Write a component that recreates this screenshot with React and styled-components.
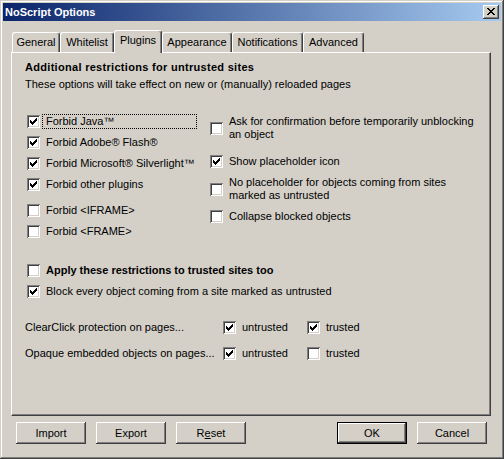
import React from "react";
import styled, { createGlobalStyle } from "styled-components";

const FACE = "#d4d0c8";

const GlobalStyle = createGlobalStyle`
  html, body {
    margin: 0;
    padding: 0;
    background: ${FACE};
  }
  body {
    font-family: "Liberation Sans", Arial, sans-serif;
    font-size: 11px;
    color: #000;
  }
`;

const Window = styled.div`
  width: 504px;
  height: 459px;
  box-sizing: border-box;
  padding: 3px;
  background: ${FACE};
  box-shadow: inset -1px -1px #404040, inset 1px 1px ${FACE},
    inset -2px -2px #808080, inset 2px 2px #fff;
  display: flex;
  flex-direction: column;
`;

const TitleBar = styled.div`
  height: 18px;
  display: flex;
  align-items: flex-start;
  justify-content: space-between;
  padding-left: 2px;
  background: linear-gradient(to right, #0a246a, #a6caf0);
`;

const Title = styled.span`
  color: #fff;
  font-weight: bold;
  line-height: 18px;
`;

const CloseButton = styled.button`
  width: 16px;
  height: 14px;
  margin: 2px 2px 0 0;
  padding: 0;
  border: none;
  background: ${FACE};
  box-shadow: inset -1px -1px #404040, inset 1px 1px #fff,
    inset -2px -2px #808080;
  svg {
    display: block;
  }
`;

const Body = styled.div`
  padding: 9px 10px 0 8px;
`;

const TabStrip = styled.div`
  height: 22px;
  display: flex;
  align-items: flex-end;
  padding-left: 1px;
`;

const Tab = styled.div`
  position: relative;
  z-index: ${(p) => (p.$active ? 2 : 1)};
  width: ${(p) => p.$w}px;
  height: ${(p) => (p.$active ? 23 : 20)}px;
  margin-bottom: ${(p) => (p.$active ? -1 : 0)}px;
  box-sizing: border-box;
  padding-top: 3px;
  line-height: 13px;
  text-align: center;
  white-space: nowrap;
  background: ${FACE};
  border-top: 1px solid #fff;
  border-left: 1px solid #fff;
  border-right: 1px solid #404040;
  border-radius: 3px 3px 0 0;
  box-shadow: inset -1px 0 #808080;
`;

const Panel = styled.div`
  position: relative;
  width: 480px;
  height: 364px;
  box-sizing: border-box;
  padding: 8px 13px 0 13px;
  border-top: 1px solid #fff;
  border-left: 1px solid #fff;
  border-right: 1px solid #404040;
  border-bottom: 1px solid #404040;
  box-shadow: inset -1px -1px #808080;
`;

const Heading = styled.div`
  font-weight: bold;
  line-height: 13px;
  letter-spacing: 0.3px;
`;

const Description = styled.div`
  margin-top: 4px;
  line-height: 13px;
`;

const Options = styled.div`
  display: grid;
  grid-template-columns: 170px 1fr;
  column-gap: 13px;
  align-items: start;
  margin-top: 23px;
  padding-left: 2px;
`;

const Column = styled.div`
  display: flex;
  flex-direction: column;
  gap: 6px;
  margin-top: ${(p) => p.$mt || 0}px;
`;

const CheckRow = styled.div`
  display: flex;
  align-items: center;
  margin-top: ${(p) => p.$mt || 0}px;
  padding-left: ${(p) => p.$indent || 0}px;
`;

const Box = styled.span`
  flex-shrink: 0;
  width: 13px;
  height: 13px;
  background: #fff;
  box-shadow: inset 1px 1px #808080, inset -1px -1px #fff,
    inset 2px 2px #404040, inset -2px -2px ${FACE};
  svg {
    display: block;
  }
`;

const Label = styled.span`
  flex: ${(p) => (p.$fill ? 1 : "none")};
  margin-left: 2px;
  padding: 0 3px;
  line-height: 13px;
  white-space: nowrap;
  font-weight: ${(p) => (p.$bold ? "bold" : "normal")};
  border: 1px dotted ${(p) => (p.$focus ? "#000" : "transparent")};
`;

const Protection = styled.div`
  display: grid;
  grid-template-columns: 198px 84px auto;
  align-items: center;
  row-gap: 11px;
  margin-top: 21px;
`;

const ProtectionLabel = styled.span`
  line-height: 13px;
`;

const ButtonRow = styled.div`
  display: flex;
  gap: 10px;
  margin-top: 6px;
  padding: 0 4px 0 5px;
`;

const Spacer = styled.div`
  flex: 1;
`;

const Button = styled.button`
  width: 70px;
  height: 22px;
  padding: 0;
  border: none;
  font: inherit;
  line-height: 22px;
  color: #000;
  background: ${FACE};
  box-shadow: ${(p) =>
    p.$default
      ? "inset 0 0 0 1px #000, inset -2px -2px #404040, inset 2px 2px #fff, inset -3px -3px #808080"
      : "inset -1px -1px #404040, inset 1px 1px #fff, inset -2px -2px #808080"};
`;

// 7x7 classic check mark, drawn pixel by pixel inside the 13x13 box
const CHECK =
  "M9 3h1v1h-1z M8 4h2v1h-2z M3 5h1v1h-1z M7 5h3v1h-3z M3 6h2v1h-2z M6 6h3v1h-3z M3 7h5v1h-5z M4 8h3v1h-3z M5 9h1v1h-1z";

// 8x7 close cross for the caption button
const CROSS =
  "M4 3h2v1h-2z M10 3h2v1h-2z M5 4h2v1h-2z M9 4h2v1h-2z M6 5h4v1h-4z M7 6h2v1h-2z M6 7h4v1h-4z M5 8h2v1h-2z M9 8h2v1h-2z M4 9h2v1h-2z M10 9h2v1h-2z";

const Checkbox = ({ checked }) => (
  <Box>
    {checked && (
      <svg width="13" height="13" viewBox="0 0 13 13" shapeRendering="crispEdges">
        <path d={CHECK} fill="#000" />
      </svg>
    )}
  </Box>
);

const Option = ({ checked, children, focus, bold, mt, indent, fill }) => (
  <CheckRow $mt={mt} $indent={indent}>
    <Checkbox checked={checked} />
    <Label $focus={focus} $bold={bold} $fill={fill}>
      {children}
    </Label>
  </CheckRow>
);

const tabs = [
  { name: "General", w: 48 },
  { name: "Whitelist", w: 54 },
  { name: "Plugins", w: 48, active: true },
  { name: "Appearance", w: 70 },
  { name: "Notifications", w: 71 },
  { name: "Advanced", w: 61 },
];

export default function App() {
  return (
    <>
      <GlobalStyle />
      <Window>
        <TitleBar>
          <Title>NoScript Options</Title>
          <CloseButton>
            <svg width="16" height="14" viewBox="0 0 16 14" shapeRendering="crispEdges">
              <path d={CROSS} fill="#000" />
            </svg>
          </CloseButton>
        </TitleBar>
        <Body>
          <TabStrip>
            {tabs.map((t) => (
              <Tab key={t.name} $w={t.w} $active={t.active}>
                {t.name}
              </Tab>
            ))}
          </TabStrip>
          <Panel>
            <Heading>Additional restrictions for untrusted sites</Heading>
            <Description>
              These options will take effect on new or (manually) reloaded pages
            </Description>

            <Options>
              <Column>
                <Option checked focus fill>
                  Forbid Java™
                </Option>
                <Option checked>Forbid Adobe® Flash®</Option>
                <Option checked>Forbid Microsoft® Silverlight™</Option>
                <Option checked>Forbid other plugins</Option>
                <Option mt={5}>Forbid &lt;IFRAME&gt;</Option>
                <Option>Forbid &lt;FRAME&gt;</Option>
              </Column>
              <Column>
                <Option>
                  Ask for confirmation before temporarily unblocking
                  <br />
                  an object
                </Option>
                <Option checked mt={6}>
                  Show placeholder icon
                </Option>
                <Option>
                  No placeholder for objects coming from sites
                  <br />
                  marked as untrusted
                </Option>
                <Option>Collapse blocked objects</Option>
              </Column>
            </Options>

            <Column $mt={24}>
              <Option bold indent={2}>
                Apply these restrictions to trusted sites too
              </Option>
              <Option checked indent={2}>
                Block every object coming from a site marked as untrusted
              </Option>
            </Column>

            <Protection>
              <ProtectionLabel>ClearClick protection on pages...</ProtectionLabel>
              <Option checked>untrusted</Option>
              <Option checked>trusted</Option>
              <ProtectionLabel>Opaque embedded objects on pages...</ProtectionLabel>
              <Option checked>untrusted</Option>
              <Option>trusted</Option>
            </Protection>
          </Panel>

          <ButtonRow>
            <Button>Import</Button>
            <Button>Export</Button>
            <Button>
              R<u>e</u>set
            </Button>
            <Spacer />
            <Button $default>OK</Button>
            <Button>Cancel</Button>
          </ButtonRow>
        </Body>
      </Window>
    </>
  );
}
